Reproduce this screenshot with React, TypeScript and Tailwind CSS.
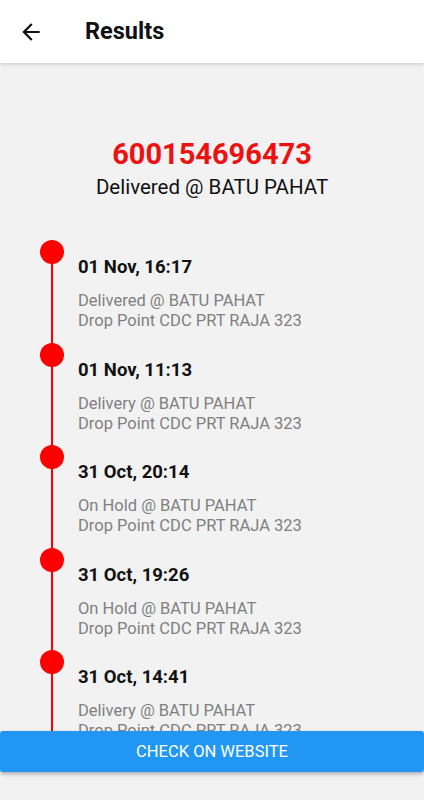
import React from "react";

const items = [
  { date: "01 Nov, 16:17", status: "Delivered @ BATU PAHAT" },
  { date: "01 Nov, 11:13", status: "Delivery @ BATU PAHAT" },
  { date: "31 Oct, 20:14", status: "On Hold @ BATU PAHAT" },
  { date: "31 Oct, 19:26", status: "On Hold @ BATU PAHAT" },
  { date: "31 Oct, 14:41", status: "Delivery @ BATU PAHAT" },
];

export default function App() {
  return (
    <div
      className="relative w-[424px] h-[800px] overflow-hidden bg-[#f2f2f2]"
      style={{ fontFamily: "Roboto, 'Noto Sans', sans-serif" }}
    >
      <header className="relative z-10 h-[63px] bg-white flex items-center shadow-[0_1px_4px_rgba(0,0,0,0.18)]">
        <svg className="ml-[18px] w-[26px] h-[26px]" viewBox="0 0 24 24" fill="#111">
          <path d="M20 11H7.83l5.59-5.59L12 4l-8 8 8 8 1.41-1.41L7.83 13H20v-2z" />
        </svg>
        <h1 className="ml-[41px] text-[23.5px] font-bold text-[#111] leading-none">Results</h1>
      </header>

      <div className="h-[709px] overflow-hidden">
        <div className="flex flex-col items-center pt-[75px]">
          <div className="text-[29px] font-bold text-[#ee1111] leading-[32px]">600154696473</div>
          <div className="text-[20.5px] text-[#111] leading-[28px] mt-[3px]">Delivered @ BATU PAHAT</div>
        </div>

        <div className="mt-[39px] flex flex-col">
          {items.map((it, i) => (
            <div key={i} className="flex h-[102.5px] shrink-0">
              <div className="ml-[40px] w-[24px] relative flex justify-center">
                <div className="absolute top-[12px] bottom-0 left-[11px] w-[2px] bg-[#ff0000]" />
                {i > 0 && <div className="absolute top-0 h-[12px] left-[11px] w-[2px] bg-[#ff0000]" />}
                <div className="relative w-[24px] h-[24px] rounded-full bg-[#ff0000]" />
              </div>
              <div className="pl-[14px] pt-[16px]">
                <div className="text-[18.5px] font-bold text-[#111] leading-[22px]">{it.date}</div>
                <div className="mt-[13px] text-[16.5px] text-[#808080] leading-[20px]">
                  <div>{it.status}</div>
                  <div>Drop Point CDC PRT RAJA 323</div>
                </div>
              </div>
            </div>
          ))}
        </div>
      </div>

      <button className="absolute left-0 right-0 bottom-[28px] h-[41px] pt-[2px] rounded-[3px] bg-[#2196f3] text-white text-[16.5px] uppercase shadow-[0_2px_4px_rgba(0,0,0,0.3)] flex items-center justify-center">
        Check on website
      </button>
    </div>
  );
}
